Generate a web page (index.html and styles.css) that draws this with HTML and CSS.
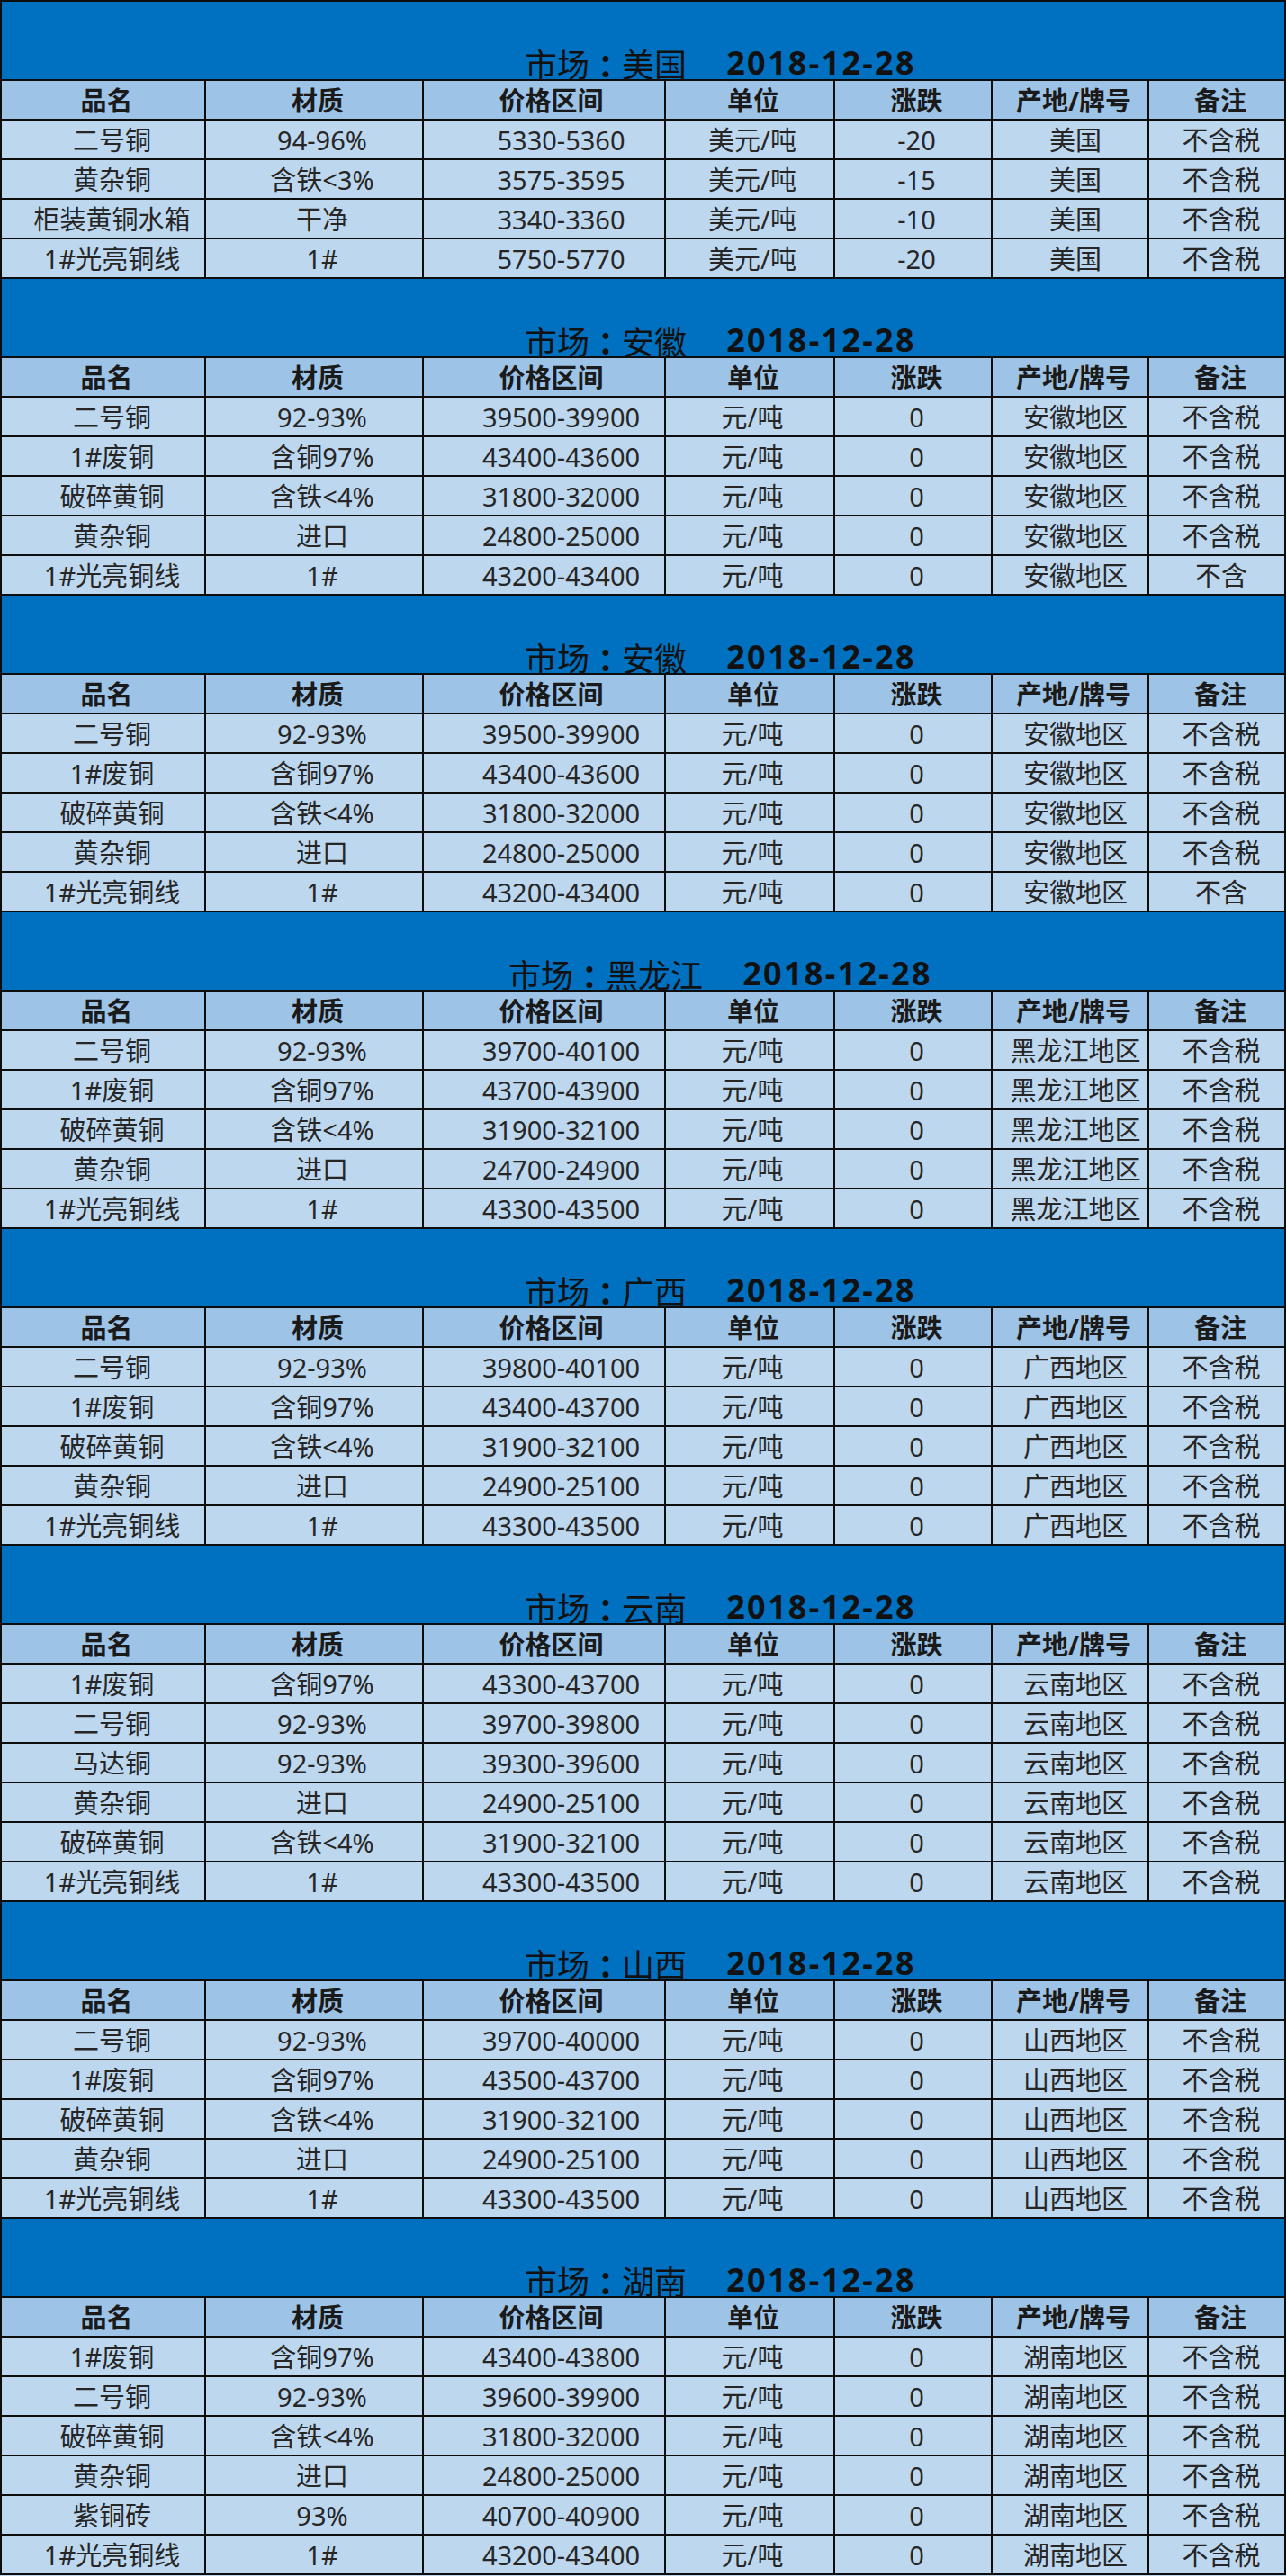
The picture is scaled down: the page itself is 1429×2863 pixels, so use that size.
FILE: index.html
```html
<!DOCTYPE html>
<html lang="zh-CN">
<head>
<meta charset="utf-8">
<title>废铜价格</title>
<link rel="stylesheet" href="styles.css">
</head>
<body>
<div class="sheet">

  <section class="market first">
    <div class="title"><span class="name">市场<span class="colon">：</span>美国</span><span class="date">2018-12-28</span></div>
    <div class="row head"><div>品名</div><div>材质</div><div>价格区间</div><div>单位</div><div>涨跌</div><div>产地/牌号</div><div>备注</div></div>
    <div class="row"><div>二号铜</div><div>94-96%</div><div>5330-5360</div><div>美元/吨</div><div>-20</div><div>美国</div><div>不含税</div></div>
    <div class="row"><div>黄杂铜</div><div>含铁&lt;3%</div><div>3575-3595</div><div>美元/吨</div><div>-15</div><div>美国</div><div>不含税</div></div>
    <div class="row"><div>柜装黄铜水箱</div><div>干净</div><div>3340-3360</div><div>美元/吨</div><div>-10</div><div>美国</div><div>不含税</div></div>
    <div class="row"><div>1#光亮铜线</div><div>1#</div><div>5750-5770</div><div>美元/吨</div><div>-20</div><div>美国</div><div>不含税</div></div>
  </section>

  <section class="market">
    <div class="title"><span class="name">市场<span class="colon">：</span>安徽</span><span class="date">2018-12-28</span></div>
    <div class="row head"><div>品名</div><div>材质</div><div>价格区间</div><div>单位</div><div>涨跌</div><div>产地/牌号</div><div>备注</div></div>
    <div class="row"><div>二号铜</div><div>92-93%</div><div>39500-39900</div><div>元/吨</div><div>0</div><div>安徽地区</div><div>不含税</div></div>
    <div class="row"><div>1#废铜</div><div>含铜97%</div><div>43400-43600</div><div>元/吨</div><div>0</div><div>安徽地区</div><div>不含税</div></div>
    <div class="row"><div>破碎黄铜</div><div>含铁&lt;4%</div><div>31800-32000</div><div>元/吨</div><div>0</div><div>安徽地区</div><div>不含税</div></div>
    <div class="row"><div>黄杂铜</div><div>进口</div><div>24800-25000</div><div>元/吨</div><div>0</div><div>安徽地区</div><div>不含税</div></div>
    <div class="row"><div>1#光亮铜线</div><div>1#</div><div>43200-43400</div><div>元/吨</div><div>0</div><div>安徽地区</div><div>不含</div></div>
  </section>

  <section class="market">
    <div class="title"><span class="name">市场<span class="colon">：</span>安徽</span><span class="date">2018-12-28</span></div>
    <div class="row head"><div>品名</div><div>材质</div><div>价格区间</div><div>单位</div><div>涨跌</div><div>产地/牌号</div><div>备注</div></div>
    <div class="row"><div>二号铜</div><div>92-93%</div><div>39500-39900</div><div>元/吨</div><div>0</div><div>安徽地区</div><div>不含税</div></div>
    <div class="row"><div>1#废铜</div><div>含铜97%</div><div>43400-43600</div><div>元/吨</div><div>0</div><div>安徽地区</div><div>不含税</div></div>
    <div class="row"><div>破碎黄铜</div><div>含铁&lt;4%</div><div>31800-32000</div><div>元/吨</div><div>0</div><div>安徽地区</div><div>不含税</div></div>
    <div class="row"><div>黄杂铜</div><div>进口</div><div>24800-25000</div><div>元/吨</div><div>0</div><div>安徽地区</div><div>不含税</div></div>
    <div class="row"><div>1#光亮铜线</div><div>1#</div><div>43200-43400</div><div>元/吨</div><div>0</div><div>安徽地区</div><div>不含</div></div>
  </section>

  <section class="market">
    <div class="title"><span class="name">市场<span class="colon">：</span>黑龙江</span><span class="date">2018-12-28</span></div>
    <div class="row head"><div>品名</div><div>材质</div><div>价格区间</div><div>单位</div><div>涨跌</div><div>产地/牌号</div><div>备注</div></div>
    <div class="row"><div>二号铜</div><div>92-93%</div><div>39700-40100</div><div>元/吨</div><div>0</div><div>黑龙江地区</div><div>不含税</div></div>
    <div class="row"><div>1#废铜</div><div>含铜97%</div><div>43700-43900</div><div>元/吨</div><div>0</div><div>黑龙江地区</div><div>不含税</div></div>
    <div class="row"><div>破碎黄铜</div><div>含铁&lt;4%</div><div>31900-32100</div><div>元/吨</div><div>0</div><div>黑龙江地区</div><div>不含税</div></div>
    <div class="row"><div>黄杂铜</div><div>进口</div><div>24700-24900</div><div>元/吨</div><div>0</div><div>黑龙江地区</div><div>不含税</div></div>
    <div class="row"><div>1#光亮铜线</div><div>1#</div><div>43300-43500</div><div>元/吨</div><div>0</div><div>黑龙江地区</div><div>不含税</div></div>
  </section>

  <section class="market">
    <div class="title"><span class="name">市场<span class="colon">：</span>广西</span><span class="date">2018-12-28</span></div>
    <div class="row head"><div>品名</div><div>材质</div><div>价格区间</div><div>单位</div><div>涨跌</div><div>产地/牌号</div><div>备注</div></div>
    <div class="row"><div>二号铜</div><div>92-93%</div><div>39800-40100</div><div>元/吨</div><div>0</div><div>广西地区</div><div>不含税</div></div>
    <div class="row"><div>1#废铜</div><div>含铜97%</div><div>43400-43700</div><div>元/吨</div><div>0</div><div>广西地区</div><div>不含税</div></div>
    <div class="row"><div>破碎黄铜</div><div>含铁&lt;4%</div><div>31900-32100</div><div>元/吨</div><div>0</div><div>广西地区</div><div>不含税</div></div>
    <div class="row"><div>黄杂铜</div><div>进口</div><div>24900-25100</div><div>元/吨</div><div>0</div><div>广西地区</div><div>不含税</div></div>
    <div class="row"><div>1#光亮铜线</div><div>1#</div><div>43300-43500</div><div>元/吨</div><div>0</div><div>广西地区</div><div>不含税</div></div>
  </section>

  <section class="market">
    <div class="title"><span class="name">市场<span class="colon">：</span>云南</span><span class="date">2018-12-28</span></div>
    <div class="row head"><div>品名</div><div>材质</div><div>价格区间</div><div>单位</div><div>涨跌</div><div>产地/牌号</div><div>备注</div></div>
    <div class="row"><div>1#废铜</div><div>含铜97%</div><div>43300-43700</div><div>元/吨</div><div>0</div><div>云南地区</div><div>不含税</div></div>
    <div class="row"><div>二号铜</div><div>92-93%</div><div>39700-39800</div><div>元/吨</div><div>0</div><div>云南地区</div><div>不含税</div></div>
    <div class="row"><div>马达铜</div><div>92-93%</div><div>39300-39600</div><div>元/吨</div><div>0</div><div>云南地区</div><div>不含税</div></div>
    <div class="row"><div>黄杂铜</div><div>进口</div><div>24900-25100</div><div>元/吨</div><div>0</div><div>云南地区</div><div>不含税</div></div>
    <div class="row"><div>破碎黄铜</div><div>含铁&lt;4%</div><div>31900-32100</div><div>元/吨</div><div>0</div><div>云南地区</div><div>不含税</div></div>
    <div class="row"><div>1#光亮铜线</div><div>1#</div><div>43300-43500</div><div>元/吨</div><div>0</div><div>云南地区</div><div>不含税</div></div>
  </section>

  <section class="market">
    <div class="title"><span class="name">市场<span class="colon">：</span>山西</span><span class="date">2018-12-28</span></div>
    <div class="row head"><div>品名</div><div>材质</div><div>价格区间</div><div>单位</div><div>涨跌</div><div>产地/牌号</div><div>备注</div></div>
    <div class="row"><div>二号铜</div><div>92-93%</div><div>39700-40000</div><div>元/吨</div><div>0</div><div>山西地区</div><div>不含税</div></div>
    <div class="row"><div>1#废铜</div><div>含铜97%</div><div>43500-43700</div><div>元/吨</div><div>0</div><div>山西地区</div><div>不含税</div></div>
    <div class="row"><div>破碎黄铜</div><div>含铁&lt;4%</div><div>31900-32100</div><div>元/吨</div><div>0</div><div>山西地区</div><div>不含税</div></div>
    <div class="row"><div>黄杂铜</div><div>进口</div><div>24900-25100</div><div>元/吨</div><div>0</div><div>山西地区</div><div>不含税</div></div>
    <div class="row"><div>1#光亮铜线</div><div>1#</div><div>43300-43500</div><div>元/吨</div><div>0</div><div>山西地区</div><div>不含税</div></div>
  </section>

  <section class="market">
    <div class="title"><span class="name">市场<span class="colon">：</span>湖南</span><span class="date">2018-12-28</span></div>
    <div class="row head"><div>品名</div><div>材质</div><div>价格区间</div><div>单位</div><div>涨跌</div><div>产地/牌号</div><div>备注</div></div>
    <div class="row"><div>1#废铜</div><div>含铜97%</div><div>43400-43800</div><div>元/吨</div><div>0</div><div>湖南地区</div><div>不含税</div></div>
    <div class="row"><div>二号铜</div><div>92-93%</div><div>39600-39900</div><div>元/吨</div><div>0</div><div>湖南地区</div><div>不含税</div></div>
    <div class="row"><div>破碎黄铜</div><div>含铁&lt;4%</div><div>31800-32000</div><div>元/吨</div><div>0</div><div>湖南地区</div><div>不含税</div></div>
    <div class="row"><div>黄杂铜</div><div>进口</div><div>24800-25000</div><div>元/吨</div><div>0</div><div>湖南地区</div><div>不含税</div></div>
    <div class="row"><div>紫铜砖</div><div>93%</div><div>40700-40900</div><div>元/吨</div><div>0</div><div>湖南地区</div><div>不含税</div></div>
    <div class="row"><div>1#光亮铜线</div><div>1#</div><div>43200-43400</div><div>元/吨</div><div>0</div><div>湖南地区</div><div>不含税</div></div>
  </section>

</div>
</body>
</html>
```
FILE: styles.css
```css
html, body {
  margin: 0;
  padding: 0;
  background: #bdd7ee;
}

body {
  font-family: "Noto Sans", "Noto Sans CJK SC", sans-serif;
}

.sheet {
  width: 1429px;
  box-sizing: border-box;
  border-left: 2px solid #0d0d0d;
  border-right: 2px solid #0d0d0d;
}

.title {
  height: 88px;
  box-sizing: border-box;
  background: #0070c0;
  border-bottom: 2px solid #0d0d0d;
  display: flex;
  align-items: flex-end;
  justify-content: center;
  padding-left: 172px;
  font-size: 36px;
  line-height: 36px;
  color: #111;
}

.market.first .title {
  height: 90px;
  border-top: 2px solid #0d0d0d;
}

.title .name {
  font-family: "Noto Sans CJK SC", sans-serif;
  font-weight: 400;
}

.title .colon {
  display: inline-block;
  font-feature-settings: "halt";
  padding: 0 9px;
  font-weight: 700;
}

.title .date {
  margin-left: 44px;
  font-weight: 700;
  letter-spacing: 2.3px;
}

.row {
  display: grid;
  grid-template-columns: 227px 242px 269px 188px 175px 174px 1fr;
  height: 44px;
  box-sizing: border-box;
  border-bottom: 2px solid #0d0d0d;
  background: #bdd7ee;
}

.row > div {
  border-right: 2px solid #0d0d0d;
  display: flex;
  align-items: center;
  justify-content: center;
  font-size: 29px;
  line-height: 1;
  color: #262626;
  white-space: nowrap;
  overflow: hidden;
}

.row > div:last-child {
  border-right: 0;
}

.row > div:nth-child(1) { padding-left: 20px; }
.row > div:nth-child(2) { padding-left: 18px; }
.row > div:nth-child(3) { padding-left: 38px; }
.row > div:nth-child(4) { padding-left: 6px; }
.row > div:nth-child(5) { padding-left: 8px; }
.row > div:nth-child(6) { padding-left: 12px; }
.row > div:nth-child(7) { padding-left: 10px; }

.row.head {
  background: #9dc3e6;
}

.row.head > div {
  font-weight: 700;
  color: #1a1a1a;
  padding-left: 8px;
}

.row.head > div:nth-child(3) {
  padding-left: 16px;
}
```
